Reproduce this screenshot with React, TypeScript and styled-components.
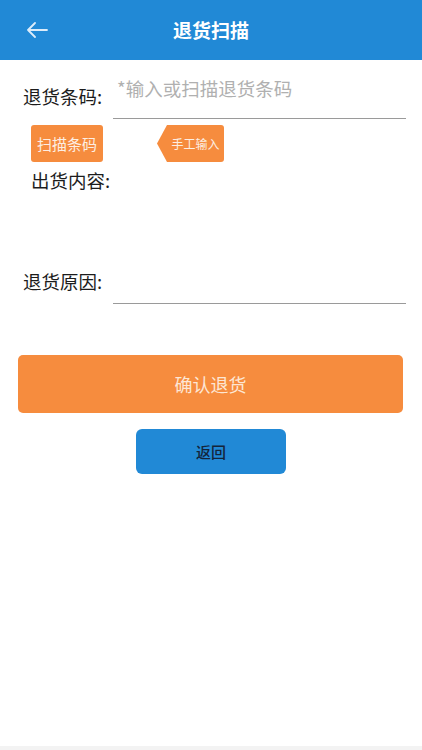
import React from "react";
import styled, { createGlobalStyle } from "styled-components";

const Global = createGlobalStyle`
  html, body { margin: 0; padding: 0; background: #ffffff; }
  body { font-family: "Noto Sans CJK SC", "Noto Sans", sans-serif; }
  * { box-sizing: border-box; }
`;

const Page = styled.div`
  min-height: 750px;
  display: flex;
  flex-direction: column;
  background: #ffffff;
`;

const Header = styled.header`
  height: 60px;
  background: #2189d6;
  display: grid;
  grid-template-columns: 60px 1fr 60px;
  align-items: center;
`;

const BackButton = styled.button`
  border: none;
  background: transparent;
  padding: 0 0 0 26px;
  height: 60px;
  display: flex;
  align-items: center;
  cursor: pointer;
`;

const Title = styled.h1`
  margin: 0;
  text-align: center;
  color: #ffffff;
  font-size: 19px;
  font-weight: 700;
  line-height: 24px;
`;

const Row = styled.div<{ $top: number }>`
  display: flex;
  align-items: flex-end;
  margin-top: ${(p) => p.$top}px;
  padding: 0 16px 0 23px;
`;

const Label = styled.label`
  width: 90px;
  flex: none;
  font-size: 18.5px;
  line-height: 24px;
  color: #1c1c1c;
  margin-bottom: 11px;
  white-space: nowrap;
`;

const Field = styled.input`
  flex: 1;
  height: 49px;
  border: none;
  border-bottom: 1px solid #9a9a9a;
  outline: none;
  padding: 0 0 12px 4px;
  font-family: inherit;
  font-size: 18.5px;
  line-height: 24px;
  color: #222;
  background: transparent;
  &::placeholder { color: #b0b0b0; }
`;

const ToolRow = styled.div`
  display: flex;
  align-items: center;
  gap: 54px;
  margin-top: 6px;
  padding-left: 31px;
`;

const ScanButton = styled.button`
  width: 72px;
  height: 37px;
  border: none;
  border-radius: 3px;
  background: #f68c3e;
  color: #fdeee2;
  font-family: inherit;
  font-size: 15px;
  padding: 0;
`;

const ManualTag = styled.button`
  width: 67px;
  height: 37px;
  border: none;
  background: #f68c3e;
  color: #fdeee2;
  font-family: inherit;
  font-size: 12px;
  padding: 0 0 0 10px;
  clip-path: polygon(10px 0, 100% 0, 100% 100%, 10px 100%, 0 50%);
  border-radius: 0 3px 3px 0;
`;

const Content = styled.div`
  margin-top: 6px;
  padding-left: 31px;
  height: 87px;
  font-size: 18.5px;
  line-height: 24px;
  color: #1c1c1c;
`;

const ConfirmButton = styled.button`
  margin: 51px 19px 0 18px;
  height: 58px;
  border: none;
  border-radius: 5px;
  background: #f68c3e;
  color: #fde6d4;
  font-family: inherit;
  font-size: 18px;
`;

const ReturnButton = styled.button`
  align-self: center;
  margin-top: 16px;
  width: 150px;
  height: 45px;
  border: none;
  border-radius: 6px;
  background: #2189d6;
  color: #14243a;
  font-family: inherit;
  font-size: 15px;
  font-weight: 500;
`;

const Footer = styled.div`
  margin-top: auto;
  height: 4px;
  background: #f3f3f3;
`;

export default function App() {
  return (
    <Page>
      <Global />
      <Header>
        <BackButton aria-label="返回">
          <svg width="22" height="16" viewBox="0 0 22 16" fill="none">
            <path d="M21 8H2M9 1L2 8l7 7" stroke="#dcecfa" strokeWidth="1.8" strokeLinecap="round" strokeLinejoin="round" />
          </svg>
        </BackButton>
        <Title>退货扫描</Title>
        <span />
      </Header>
      <Row $top={10}>
        <Label>退货条码:</Label>
        <Field placeholder="*输入或扫描退货条码" />
      </Row>
      <ToolRow>
        <ScanButton>扫描条码</ScanButton>
        <ManualTag>手工输入</ManualTag>
      </ToolRow>
      <Content>出货内容:</Content>
      <Row $top={0}>
        <Label>退货原因:</Label>
        <Field />
      </Row>
      <ConfirmButton>确认退货</ConfirmButton>
      <ReturnButton>返回</ReturnButton>
      <Footer />
    </Page>
  );
}
